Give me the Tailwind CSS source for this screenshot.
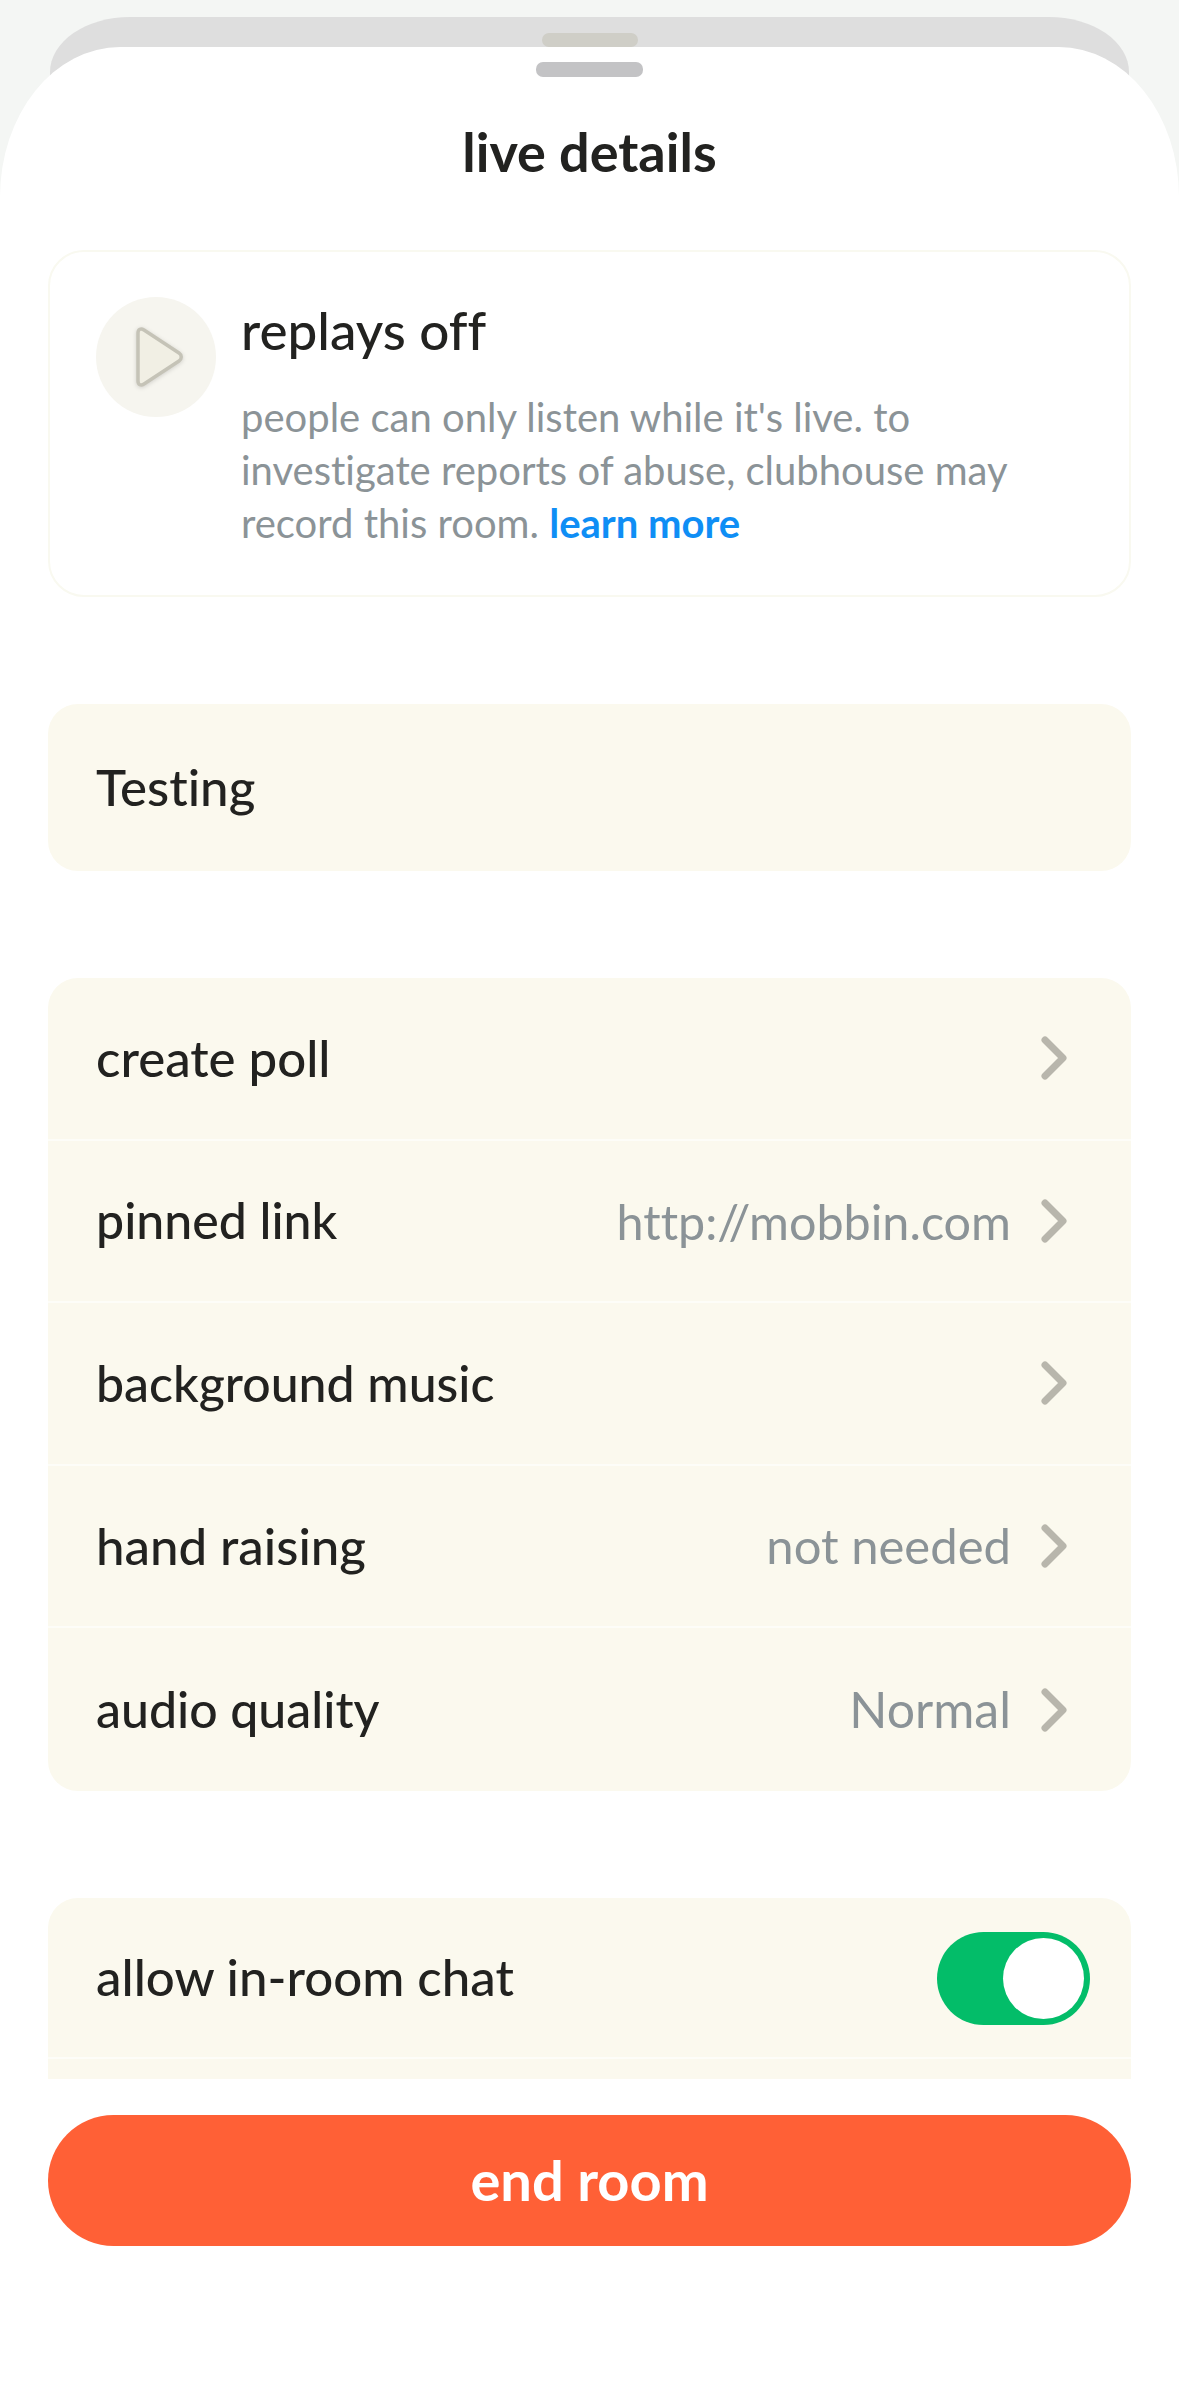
<!DOCTYPE html>
<html lang="en">
<head>
    <meta charset="UTF-8">
    <meta name="viewport" content="width=device-width, initial-scale=1.0">
    <title>live details</title>
    <script src="https://cdn.jsdelivr.net/npm/@tailwindcss/browser@4"></script>
</head>
<body class="bg-[#f4f6f4]">
    <div class="relative w-[1179px] h-[2396px] overflow-hidden pt-[47px] font-['Lato','Noto_Sans',sans-serif] [font-variant-ligatures:none] text-[#222220]">
        <!-- sheet behind -->
        <div class="absolute left-[50px] top-[17px] w-[1079px] h-[120px] rounded-tl-[80px_55px] rounded-tr-[80px_55px] bg-[#dedede] flex justify-center pt-[16px]">
            <div class="w-[96px] h-[14px] rounded-[7px] bg-[#cfcec7]"></div>
        </div>

        <div class="relative h-[2349px] rounded-tl-[120px_150px] rounded-tr-[120px_150px] bg-white px-[48px] flex flex-col">
            <div class="w-[107px] h-[15px] rounded-[7px] bg-[#c3c3c5] mx-auto mt-[15px]"></div>
            <h1 class="mt-[53px] h-[44px] leading-[44px] text-center text-[54px] font-bold">live details</h1>

            <!-- replays -->
            <div class="mt-[76px] h-[347px] rounded-[36px] border-2 border-[#f9f9f0] pl-[46px] pt-[45px] flex">
                <div class="w-[120px] h-[120px] rounded-full bg-[#f6f5ef] flex items-center justify-center shrink-0">
                    <svg width="60" height="70" viewBox="0 0 60 70" class="drop-shadow-sm">
                        <path d="M12 11 C12 7 15 6 18 8 L53 31 C56 33 56 37 53 39 L18 62 C15 64 12 63 12 59 Z" fill="#f1efe4" stroke="#c5c3b7" stroke-width="3.5" stroke-linejoin="round"/>
                    </svg>
                </div>
                <div class="ml-[25px] w-[840px]">
                    <div class="text-[53px] font-medium leading-[56px] mt-[5px]">replays off</div>
                    <p class="mt-[33px] text-[40px] leading-[53px] text-[#8b9397]">people can only listen while it's live. to<br>investigate reports of abuse, clubhouse may<br>record this room. <span class="font-bold text-[#0f8ef5]">learn more</span></p>
                </div>
            </div>

            <div class="mt-[107px] h-[167px] rounded-[30px] bg-[#fbf9ee] pl-[48px] flex items-center text-[51px] font-medium">Testing</div>

            <!-- settings list -->
            <div class="mt-[107px] rounded-[30px] bg-[#fbf9ee] divide-y-2 divide-white/60">
                <div class="h-[162.6px] pl-[48px] pr-[63px] flex items-center text-[51px] font-medium">
                    <span>create poll</span>
                    <svg width="30" height="46" viewBox="0 0 30 46" class="ml-auto"><path d="M7 5 L25 23 L7 41" fill="none" stroke="#b8b6ac" stroke-width="7" stroke-linecap="round" stroke-linejoin="round"/></svg>
                </div>
                <div class="h-[162.6px] pl-[48px] pr-[63px] flex items-center text-[50px] font-medium">
                    <span>pinned link</span>
                    <span class="ml-auto mr-[27px] text-[48.5px] font-normal text-[#8b9397]">http://mobbin.com</span>
                    <svg width="30" height="46" viewBox="0 0 30 46"><path d="M7 5 L25 23 L7 41" fill="none" stroke="#b8b6ac" stroke-width="7" stroke-linecap="round" stroke-linejoin="round"/></svg>
                </div>
                <div class="h-[162.6px] pl-[48px] pr-[63px] flex items-center text-[50px] font-medium">
                    <span>background music</span>
                    <svg width="30" height="46" viewBox="0 0 30 46" class="ml-auto"><path d="M7 5 L25 23 L7 41" fill="none" stroke="#b8b6ac" stroke-width="7" stroke-linecap="round" stroke-linejoin="round"/></svg>
                </div>
                <div class="h-[162.6px] pl-[48px] pr-[63px] flex items-center text-[51px] font-medium">
                    <span>hand raising</span>
                    <span class="ml-auto mr-[27px] text-[49px] font-normal text-[#8b9397]">not needed</span>
                    <svg width="30" height="46" viewBox="0 0 30 46"><path d="M7 5 L25 23 L7 41" fill="none" stroke="#b8b6ac" stroke-width="7" stroke-linecap="round" stroke-linejoin="round"/></svg>
                </div>
                <div class="h-[162.6px] pl-[48px] pr-[63px] flex items-center text-[50px] font-medium">
                    <span>audio quality</span>
                    <span class="ml-auto mr-[27px] font-normal text-[#8b9397]">Normal</span>
                    <svg width="30" height="46" viewBox="0 0 30 46"><path d="M7 5 L25 23 L7 41" fill="none" stroke="#b8b6ac" stroke-width="7" stroke-linecap="round" stroke-linejoin="round"/></svg>
                </div>
            </div>

            <!-- toggles, cut off by the footer -->
            <div class="mt-[107px] h-[181px] overflow-hidden rounded-t-[30px] bg-[#fbf9ee]">
                <div class="h-[161px] border-b-2 border-white/60 pl-[48px] pr-[41px] flex items-center justify-between text-[51px] font-medium">
                    <span>allow in-room chat</span>
                    <div class="w-[153px] h-[93px] mt-[2px] rounded-full bg-[#03bd69] flex items-center justify-end pr-[6px]">
                        <div class="w-[81px] h-[81px] rounded-full bg-white"></div>
                    </div>
                </div>
            </div>

            <button class="mt-[36px] h-[131px] rounded-[66px] bg-[#ff6036] text-white text-[56px] font-bold">end room</button>
        </div>
    </div>
</body>
</html>
